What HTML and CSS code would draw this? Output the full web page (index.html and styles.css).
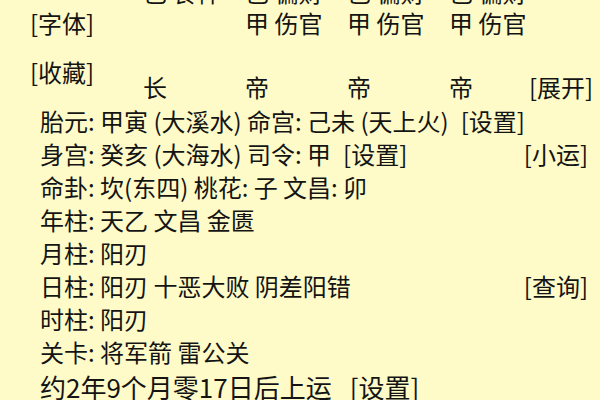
FILE: index.html
```html
<!DOCTYPE html>
<html lang="zh">
<head>
<meta charset="utf-8">
<link rel="stylesheet" href="styles.css">
</head>
<body>
<div class="page">
  <div class="head">
    <div class="labels">
      <div class="lab">[字体]</div>
      <div class="lab lab2">[收藏]</div>
    </div>
    <div class="cols">
      <div class="c">己 食神</div><div class="c">己 偏财</div><div class="c">己 偏财</div><div class="c">己 偏财</div>
      <div class="c r2"></div><div class="c r2">甲 伤官</div><div class="c r2">甲 伤官</div><div class="c r2">甲 伤官</div>
      <div class="c r3">长</div><div class="c r3">帝</div><div class="c r3">帝</div><div class="c r3">帝</div>
    </div>
    <div class="expand">[展开]</div>
  </div>
  <div class="info">
    <div class="line"><span>胎元: 甲寅 (大溪水) 命宫: 己未 (天上火)<span class="set">[设置]</span></span></div>
    <div class="line"><span>身宫: 癸亥 (大海水) 司令: 甲<span class="set">[设置]</span></span><span>[小运]</span></div>
    <div class="line"><span>命卦: 坎(东四) 桃花: 子 文昌: 卯</span></div>
    <div class="line"><span>年柱: 天乙 文昌 金匮</span></div>
    <div class="line"><span>月柱: 阳刃</span></div>
    <div class="line"><span>日柱: 阳刃 十恶大败 阴差阳错</span><span>[查询]</span></div>
    <div class="line"><span>时柱: 阳刃</span></div>
    <div class="line"><span>关卡: 将军箭 雷公关</span></div>
    <div class="line last"><span>约2年9个月零17日后上运<span class="set big">[设置]</span></span></div>
  </div>
</div>
</body>
</html>
```
FILE: styles.css
```css
html, body {
  margin: 0;
  padding: 0;
  background: #fefbc8;
}
body {
  width: 600px;
  height: 400px;
  overflow: hidden;
  font-family: "Noto Sans CJK SC", "Noto Sans", sans-serif;
  color: #141414;
  font-size: 24px;
}
.page {
  width: 600px;
}
.head {
  display: flex;
  margin-top: -22px;
  padding-left: 30px;
  padding-right: 12px;
  line-height: 27px;
}
.labels {
  width: 113px;
  flex-shrink: 0;
  padding-top: 31px;
  white-space: nowrap;
}
.lab2 {
  margin-top: 22px;
}
.cols {
  display: grid;
  flex-shrink: 0;
  grid-template-columns: 102px 102px 102px 80px;
}
.c {
  white-space: nowrap;
  height: 27px;
}
.r2 {
  margin-top: 4px;
}
.r3 {
  margin-top: 37px;
}
.expand {
  margin-left: auto;
  align-self: flex-end;
  flex-shrink: 0;
  white-space: nowrap;
}
.info {
  margin-top: 4px;
  padding-left: 40px;
  padding-right: 12px;
}
.line {
  display: flex;
  justify-content: space-between;
  line-height: 33px;
  height: 33px;
  white-space: nowrap;
}
.set {
  margin-left: 12px;
}
.last {
  font-size: 26px;
  line-height: 38px;
}
.set.big {
  margin-left: 18px;
}
```
